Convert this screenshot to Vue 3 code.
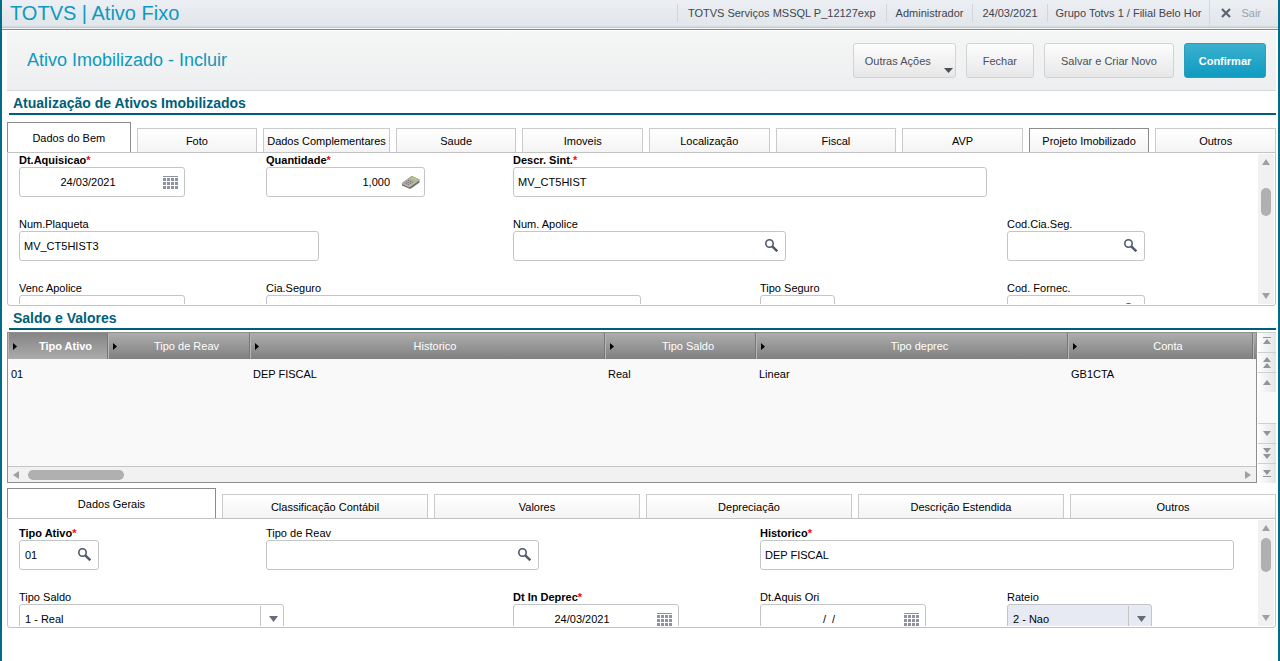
<script setup>
import { ref } from 'vue'

const assetTabs = ['Dados do Bem', 'Foto', 'Dados Complementares', 'Saude', 'Imoveis', 'Localização', 'Fiscal', 'AVP', 'Projeto Imobilizado', 'Outros']
const valueTabs = ['Dados Gerais', 'Classificação Contábil', 'Valores', 'Depreciação', 'Descrição Estendida', 'Outros']

const assetTab = ref('Dados do Bem')
const valueTab = ref('Dados Gerais')

const assetFields = ref([
  { id: 'dt-aquisicao', label: 'Dt.Aquisicao', required: true, col: 1, row: 1, size: 'date', icon: 'calendar', value: '24/03/2021' },
  { id: 'quantidade', label: 'Quantidade', required: true, col: 2, row: 1, size: 'number', icon: 'calculator', value: '1,000' },
  { id: 'descr-sint', label: 'Descr. Sint.', required: true, col: 3, row: 1, size: 'full', value: 'MV_CT5HIST' },
  { id: 'num-plaqueta', label: 'Num.Plaqueta', col: 1, row: 2, size: 'long', value: 'MV_CT5HIST3' },
  { id: 'num-apolice', label: 'Num. Apolice', col: 3, row: 2, size: 'lookup', icon: 'search', value: '' },
  { id: 'cod-cia-seg', label: 'Cod.Cia.Seg.', col: 5, row: 2, size: 'code', icon: 'search', value: '' },
  { id: 'venc-apolice', label: 'Venc Apolice', col: 1, row: 3, size: 'date', icon: 'calendar', value: '' },
  { id: 'cia-seguro', label: 'Cia.Seguro', col: 2, row: 3, size: 'name', value: '' },
  { id: 'tipo-seguro', label: 'Tipo Seguro', col: 4, row: 3, size: 'short', value: '' },
  { id: 'cod-fornec', label: 'Cod. Fornec.', col: 5, row: 3, size: 'code', icon: 'search', value: '' },
])

const valueFields = ref([
  { id: 'tipo-ativo', label: 'Tipo Ativo', required: true, col: 1, row: 1, size: 'type', icon: 'search', value: '01' },
  { id: 'tipo-reav', label: 'Tipo de Reav', col: 2, row: 1, size: 'lookup', icon: 'search', value: '' },
  { id: 'historico', label: 'Historico', required: true, col: 4, row: 1, size: 'full', value: 'DEP FISCAL' },
  { id: 'tipo-saldo', label: 'Tipo Saldo', col: 1, row: 2, size: 'choice', select: true, value: '1 - Real' },
  { id: 'dt-in-deprec', label: 'Dt In Deprec', required: true, col: 3, row: 2, size: 'date', icon: 'calendar', value: '24/03/2021' },
  { id: 'dt-aquis-ori', label: 'Dt.Aquis Ori', col: 4, row: 2, size: 'date', icon: 'calendar', value: '/  /' },
  { id: 'rateio', label: 'Rateio', col: 5, row: 2, size: 'flag', select: true, shaded: true, value: '2 - Nao' },
])

const panels = [
  { key: 'asset', fields: assetFields },
  { key: 'value', fields: valueFields },
]

const columns = [
  { name: 'Tipo Ativo', cls: 'c-type', cell: '01' },
  { name: 'Tipo de Reav', cls: 'c-reav', cell: '' },
  { name: 'Historico', cls: 'c-hist', cell: 'DEP FISCAL' },
  { name: 'Tipo Saldo', cls: 'c-saldo', cell: 'Real' },
  { name: 'Tipo deprec', cls: 'c-deprec', cell: 'Linear' },
  { name: 'Conta', cls: 'c-conta', cell: 'GB1CTA' },
]

const navTop = [
  { label: 'Primeiro registro', d: 'M5 3h8v1H5zM9 5l4 5H5z' },
  { label: 'Página anterior', d: 'M9 3l4 5H5zM9 9l4 5H5z' },
  { label: 'Registro anterior', d: 'M9 6l4 5H5z' },
]
const navBottom = [
  { label: 'Próximo registro', d: 'M9 11l4-5H5z' },
  { label: 'Próxima página', d: 'M9 8l4-5H5zM9 14l4-5H5z' },
  { label: 'Último registro', d: 'M9 10l4-5H5zM5 11h8v1H5z' },
]
const calendarRows = [3, 7, 11]
const calendarCols = [0, 4, 8, 12]
</script>

<template>
  <div class="app">
    <header class="topbar">
      <h1>TOTVS | Ativo Fixo</h1>
      <div class="session">
        <span class="info server">TOTVS Serviços MSSQL P_12127exp</span>
        <span class="info">Administrador</span>
        <span class="info">24/03/2021</span>
        <span class="info branch">Grupo Totvs 1 / Filial Belo Hor</span>
        <button class="exit" type="button">
          <svg width="10" height="10" viewBox="0 0 10 10"><path d="M1 1l8 8M9 1l-8 8" stroke="#5c6370" stroke-width="2.200" /></svg>
          Sair
        </button>
      </div>
    </header>

    <main>
      <div class="actionbar">
        <h2>Ativo Imobilizado - Incluir</h2>
        <div class="actions">
          <button type="button" class="btn menu">
            Outras Ações
            <svg class="caret" width="9" height="5" viewBox="0 0 9 5"><path d="M0 0h9L4.500 5z" fill="#4a4f59" /></svg>
          </button>
          <button type="button" class="btn">Fechar</button>
          <button type="button" class="btn">Salvar e Criar Novo</button>
          <button type="button" class="btn primary">Confirmar</button>
        </div>
      </div>

      <template v-for="(panel, index) in panels" :key="panel.key">
        <h3 class="section">{{ index === 0 ? 'Atualização de Ativos Imobilizados' : 'Saldo e Valores' }}</h3>

        <div v-if="panel.key === 'value'" class="browse">
          <div class="sheet">
            <table>
              <thead>
                <tr>
                  <th v-for="(c, i) in columns" :key="c.name" :class="[c.cls, { sorted: i === 0 }]" scope="col">
                    <div class="head">
                      <svg width="4" height="8" viewBox="0 0 4 8"><path d="M0 1l4 3.500L0 8z" /></svg>
                      <span>{{ c.name }}</span>
                    </div>
                  </th>
                  <th class="c-end"></th>
                </tr>
              </thead>
              <tbody>
                <tr>
                  <td v-for="c in columns" :key="c.name">{{ c.cell }}</td>
                  <td></td>
                </tr>
              </tbody>
            </table>
            <div class="hscroll">
              <svg width="6" height="8" viewBox="0 0 6 8"><path d="M6 0v8L0 4z" fill="#a0a0a0" /></svg>
              <div class="hthumb"></div>
              <svg class="end" width="6" height="8" viewBox="0 0 6 8"><path d="M0 0v8l6-4z" fill="#a0a0a0" /></svg>
            </div>
          </div>
          <div class="nav">
            <div>
              <button v-for="n in navTop" :key="n.label" type="button" :aria-label="n.label">
                <svg width="18" height="17" viewBox="0 0 18 17"><path :d="n.d" /></svg>
              </button>
            </div>
            <div>
              <button v-for="n in navBottom" :key="n.label" type="button" :aria-label="n.label">
                <svg width="18" height="17" viewBox="0 0 18 17"><path :d="n.d" /></svg>
              </button>
            </div>
          </div>
        </div>

        <div class="tabs" role="tablist">
          <template v-if="panel.key === 'asset'">
            <button
              v-for="t in assetTabs" :key="t" type="button" role="tab" :aria-selected="assetTab === t"
              :class="{ active: assetTab === t, marked: t === 'Projeto Imobilizado' }" @click="assetTab = t"
            >{{ t }}</button>
          </template>
          <template v-else>
            <button
              v-for="t in valueTabs" :key="t" type="button" role="tab" :aria-selected="valueTab === t"
              :class="{ active: valueTab === t }" @click="valueTab = t"
            >{{ t }}</button>
          </template>
        </div>

        <div class="panel" :class="panel.key">
          <div class="fields">
            <div v-for="f in panel.fields.value" :key="f.id" class="field" :class="['col' + f.col, 'row' + f.row]">
              <label :for="f.id" :class="{ required: f.required }">{{ f.label }}<i v-if="f.required">*</i></label>
              <div class="box" :class="[f.size, { shaded: f.shaded, picker: f.select }]">
                <template v-if="f.select">
                  <select :id="f.id" v-model="f.value"><option>{{ f.value }}</option></select>
                  <span class="drop"><svg width="9" height="6" viewBox="0 0 9 6"><path d="M0 0h9L4.500 6z" fill="#666c7c" /></svg></span>
                </template>
                <template v-else>
                  <input :id="f.id" v-model="f.value" type="text">
                  <button v-if="f.icon" class="tool" type="button" :aria-label="f.label">
                    <svg v-if="f.icon === 'search'" width="13" height="13" viewBox="0 0 13 13" fill="none" stroke="#4d5868">
                      <circle cx="4.500" cy="4.500" r="3.700" stroke-width="1.600" />
                      <path d="M7.300 7.300l5 5" stroke-width="2.400" />
                    </svg>
                    <svg v-else-if="f.icon === 'calendar'" width="15" height="14" viewBox="0 0 15 14" fill="#8d929f">
                      <rect y="1" width="15" height="1" />
                      <template v-for="y in calendarRows" :key="y">
                        <rect v-for="x in calendarCols" :key="x" :x="x" :y="y" width="3" height="3" />
                      </template>
                    </svg>
                    <svg v-else width="19" height="14" viewBox="-1 0 19 14">
                      <path d="M0 8L9 1.500Q10 1 11 1.500L17.500 4.500v3L9 13.500Q8 14 7 13.500L0 10.500z" fill="#6f6b66" />
                      <path d="M0 8L9 1.500Q10 1 11 1.500L17.500 4.500 8.500 11.500 6.500 11.500z" fill="#b3aea6" />
                      <path d="M8.500 3.200l2-1.400 5.500 2.600-2.300 1.700z" fill="#a8cf74" />
                      <path d="M2.500 7.700l4.600 2M4.200 6.500l4.800 2.100M6 5.200l5 2.200" stroke="#77726c" stroke-dasharray="1.400 0.600" />
                      <path d="M0 8.500l7 3.500 10.500-7" fill="none" stroke="#d6d3ce" stroke-width=".7" />
                    </svg>
                  </button>
                </template>
              </div>
            </div>
          </div>
          <div class="vscroll">
            <svg width="8" height="6" viewBox="0 0 8 6"><path d="M4 0l4 6H0z" fill="#a0a0a0" /></svg>
            <div class="track"><div class="thumb"></div></div>
            <svg width="8" height="6" viewBox="0 0 8 6"><path d="M0 0h8L4 6z" fill="#a0a0a0" /></svg>
          </div>
        </div>
      </template>
    </main>
  </div>
</template>

<style>
body {
  margin: 0;
  background: #fff;
}
</style>

<style scoped>
* {
  box-sizing: border-box;
}
.app {
  min-height: 100vh;
  border: solid #006d85;
  border-width: 0 2px;
  font: 11px/14px "Liberation Sans", Arial, sans-serif;
  color: #000;
}
button, input, select {
  margin: 0;
  border: 0;
  padding: 0;
  background: none;
  font: inherit;
  color: inherit;
}
svg {
  display: block;
  flex: none;
}
.topbar {
  display: flex;
  justify-content: space-between;
  height: 30px;
  border-bottom: 1px solid #84898a;
  background: linear-gradient(#eceff3, #e1e6eb 26px, #c6cccf 27px, #c6cccf 28px, #f2f5f5 28px);
}
h1 {
  margin: 0;
  padding-left: 8px;
  font-size: 20px;
  line-height: 26px;
  font-weight: 400;
  color: #0c9abe;
}
.session {
  display: flex;
  align-items: center;
  height: 26px;
  color: #41454e;
}
.info {
  padding: 2px 9px;
  border-left: 1px solid #d3d7dc;
}
.info.server {
  padding: 2px 10px;
}
.info.branch {
  padding: 2px 8px;
}
.exit {
  display: flex;
  align-items: center;
  gap: 10px;
  align-self: stretch;
  padding: 0 17px 0 11px;
  border-left: 1px solid #d3d7dc;
  color: #9a9fa9;
}
main {
  padding: 1px 2px 0 5px;
}
.actionbar {
  display: flex;
  justify-content: space-between;
  align-items: center;
  height: 60px;
  padding: 0 10px 0 20px;
  border-bottom: 1px solid #d6d8da;
  background: linear-gradient(#f5f7f6, #eceef0);
}
h2 {
  margin: 0;
  padding-bottom: 2px;
  font-size: 18px;
  line-height: 22px;
  font-weight: 400;
  color: #0c9abe;
}
.actions {
  display: flex;
  gap: 10px;
}
.btn {
  height: 35px;
  padding: 0 16px;
  border: 1px solid #d2d3d5;
  border-radius: 3px;
  background: linear-gradient(#fdfdfd, #e7e7e7);
  color: #4a4e58;
}
.btn.menu {
  position: relative;
  padding: 0 24px 0 11px;
}
.caret {
  position: absolute;
  right: 2px;
  bottom: 4px;
}
.btn.primary {
  min-width: 82px;
  padding: 0 12px;
  border-color: #2c9dbb;
  background: linear-gradient(#3bb0cf, #0f9bc1);
  color: #fff;
  font-weight: 700;
}
.section {
  margin: 0 0 0 2px;
  padding: 4px 0 0 4px;
  height: 24px;
  border-bottom: 2px solid #005f78;
  font-size: 14px;
  line-height: 17px;
  font-weight: 700;
  color: #005f78;
}
.tabs {
  display: flex;
  align-items: flex-end;
  gap: 6px;
  margin-top: 7px;
}
.tabs button {
  flex: 1 1 0;
  height: 24px;
  padding: 0 3px;
  border: 1px solid #cacaca;
  border-bottom: 0;
  background: linear-gradient(#fff, #f4f4f4);
  white-space: nowrap;
}
.tabs button.marked {
  border-color: #8c8c8c;
}
.tabs button.active {
  flex-basis: 11px;
  height: 30px;
  border-color: #8c8c8c;
  background: #fff;
}
.panel {
  display: flex;
  gap: 4px;
  padding: 0 1px 1px 11px;
  border: 1px solid #c3c3c3;
  border-radius: 0 0 3px 3px;
}
.panel.asset {
  height: 154px;
}
.panel.value {
  height: 110px;
}
.fields {
  flex: 1;
  display: grid;
  grid-template-columns: repeat(5, minmax(0, 1fr));
  grid-auto-rows: 44px;
  row-gap: 20px;
  overflow: hidden;
}
.value .fields {
  padding-top: 7px;
}
.field {
  white-space: nowrap;
}
.col1 { grid-column: 1; }
.col2 { grid-column: 2; }
.col3 { grid-column: 3; }
.col4 { grid-column: 4; }
.col5 { grid-column: 5; }
.row1 { grid-row: 1; }
.row2 { grid-row: 2; }
.row3 { grid-row: 3; }
label {
  display: block;
}
label.required {
  font-weight: 700;
}
label i {
  font-style: normal;
  color: #ff0018;
}
.box {
  position: relative;
  display: flex;
  height: 30px;
  border: 1px solid #c3c5c7;
  border-radius: 3px;
  background: #fff;
}
.box input {
  flex: 1;
  min-width: 0;
  padding: 0 4px;
}
.tool {
  display: flex;
  align-items: flex-start;
  justify-content: center;
  width: 28px;
  padding: 7px 0 0 1px;
}
.date { width: 166px; }
.date input { text-align: center; white-space: pre; }
.number { width: 159px; }
.number input { padding-right: 6px; text-align: right; }
.full { width: 474px; }
.long { width: 300px; }
.lookup { width: 273px; }
.code { width: 138px; }
.name { width: 375px; }
.short { width: 75px; }
.type { width: 80px; }
.choice { width: 265px; }
.flag { width: 145px; }
.type input {
  padding-left: 5px;
}
.box select {
  flex: 1;
  appearance: none;
  padding: 0 5px;
  outline: 0;
}
.drop {
  display: flex;
  align-items: center;
  justify-content: center;
  width: 23px;
  margin: 1px 0;
  padding-left: 2px;
  border-left: 1px solid #c3c5c7;
  pointer-events: none;
}
.shaded {
  background: #e7eaf2;
}
.vscroll {
  display: flex;
  flex-direction: column;
  align-items: center;
  width: 16px;
  margin-top: 1px;
  padding: 5px 0;
  background: #f1f1f1;
}
.track {
  flex: 1;
  width: 10px;
  padding-top: 7px;
}
.asset .track {
  padding-top: 23px;
}
.thumb {
  height: 34px;
  border-radius: 5px;
  background: #b0b0b0;
}
.asset .thumb {
  height: 28px;
}
.browse {
  display: flex;
  gap: 1px;
  height: 151px;
  margin-top: 2px;
}
.browse + .tabs {
  margin-top: 5px;
}
.sheet {
  flex: 1;
  display: flex;
  flex-direction: column;
  justify-content: space-between;
  border: 1px solid #8e8e8e;
  background: #f9f9f9;
}
table {
  width: 100%;
  table-layout: fixed;
  border-collapse: separate;
  border-spacing: 0;
}
th {
  height: 26px;
  padding: 0 0 0 5px;
  border-right: 1px solid #777;
  background: linear-gradient(#adadad, #808080);
  box-shadow: inset 1px 0 #b6b6b6;
  font-weight: 400;
  color: #fff;
}
th.sorted {
  background: linear-gradient(#858585, #ababab);
  font-weight: 700;
}
.head {
  display: flex;
  align-items: center;
}
.head span {
  flex: 1;
  padding-left: 7px;
}
.c-type { width: 100px; }
.c-reav { width: 142px; }
.c-saldo { width: 151px; }
.c-deprec { width: 312px; }
.c-conta { width: 185px; }
.c-end { width: 3px; padding: 0; border: 0; }
td {
  height: 30px;
  padding: 0 3px;
}
.hscroll {
  display: flex;
  align-items: center;
  height: 16px;
  padding: 0 5px;
  border-top: 1px solid #c6c6c6;
  background: #f1f1f1;
}
.hthumb {
  width: 96px;
  height: 10px;
  margin-left: 9px;
  border-radius: 5px;
  background: #b0b0b0;
}
.end {
  margin-left: auto;
}
.nav {
  display: flex;
  flex-direction: column;
  justify-content: space-between;
  width: 18px;
  background: #f9f9fb;
}
.nav button {
  display: flex;
  align-items: center;
  width: 18px;
  height: 20px;
  border-top: 1px solid #cccfd2;
  background: linear-gradient(90deg, #fdfdfd, #e3e5e8);
}
.nav path {
  fill: #949494;
}
</style>
